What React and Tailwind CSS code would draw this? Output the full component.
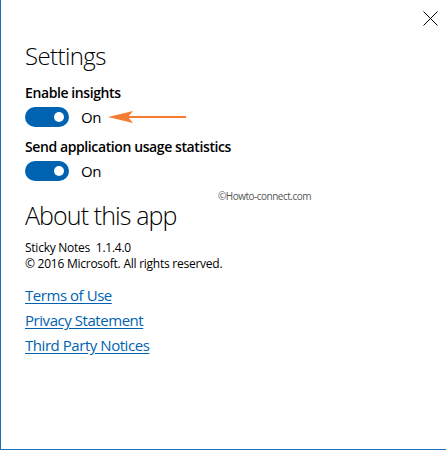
import React, { useState } from "react";

function Toggle({ on, onChange }) {
  return (
    <button
      onClick={onChange}
      className={`w-[44px] h-[20px] rounded-full flex items-center px-[5px] ${on ? "bg-[#0063b1] justify-end" : "bg-white border-2 border-black justify-start"}`}
    >
      <span className={`block w-[10px] h-[10px] rounded-full ${on ? "bg-white" : "bg-black"}`} />
    </button>
  );
}

function SettingRow({ label, on, onChange, arrow }) {
  return (
    <div>
      <p className="text-[14px] leading-[20px] font-semibold tracking-[-0.4px]">{label}</p>
      <div className="flex items-center h-[20px] mt-[4px]">
        <Toggle on={on} onChange={onChange} />
        <span className="ml-[12px] w-[27px] text-[15px] leading-[20px] tracking-[-0.3px]">{on ? "On" : "Off"}</span>
        {arrow && (
          <svg width="78" height="12" viewBox="0 0 78 12">
            <polygon points="0,6 25,0 20,6 25,12" fill="#f47b2f" />
            <line x1="20" y1="6" x2="78" y2="6" stroke="#f47b2f" strokeWidth="2" />
          </svg>
        )}
      </div>
    </div>
  );
}

export default function App() {
  const [insights, setInsights] = useState(true);
  const [usage, setUsage] = useState(true);

  return (
    <div
      className="relative w-[446px] h-[450px] bg-white border-l border-b border-[#1e70b8] text-black overflow-hidden"
      style={{ fontFamily: '"Open Sans", "Liberation Sans", sans-serif' }}
    >
      <div className="flex justify-end h-[40px] pt-[11px] pr-[8px]">
        <button className="w-[15px] h-[15px]">
          <svg width="15" height="15" viewBox="0 0 15 15">
            <line x1="0.5" y1="0.5" x2="14.5" y2="14.5" stroke="#000" strokeWidth="1" />
            <line x1="14.5" y1="0.5" x2="0.5" y2="14.5" stroke="#000" strokeWidth="1" />
          </svg>
        </button>
      </div>

      <div className="pl-[24px]">
        <h1 className="text-[24px] leading-[32px] font-light tracking-[-0.6px]">Settings</h1>

        <div className="mt-[11px]">
          <SettingRow label="Enable insights" on={insights} onChange={() => setInsights(!insights)} arrow />
        </div>
        <div className="mt-[10px]">
          <SettingRow label="Send application usage statistics" on={usage} onChange={() => setUsage(!usage)} />
        </div>

        <h2 className="mt-[18px] text-[25px] leading-[32px] font-light tracking-[-0.9px]">About this app</h2>

        <div className="mt-[9px] text-[12px] leading-[16px] tracking-[-0.25px]">
          <p>Sticky Notes&nbsp;&nbsp;1.1.4.0</p>
          <p>© 2016 Microsoft. All rights reserved.</p>
        </div>

        <div className="mt-[11px] flex flex-col items-start text-[15px] leading-[25px] tracking-[-0.45px] text-[#0063b1]">
          <a href="#" className="underline underline-offset-2">Terms of Use</a>
          <a href="#" className="underline underline-offset-2">Privacy Statement</a>
          <a href="#" className="underline underline-offset-2">Third Party Notices</a>
        </div>
      </div>

      <span className="absolute left-[217px] top-[190px] text-[10px] leading-[12px] tracking-[-0.5px] text-[#555]">©Howto-connect.com</span>
    </div>
  );
}
